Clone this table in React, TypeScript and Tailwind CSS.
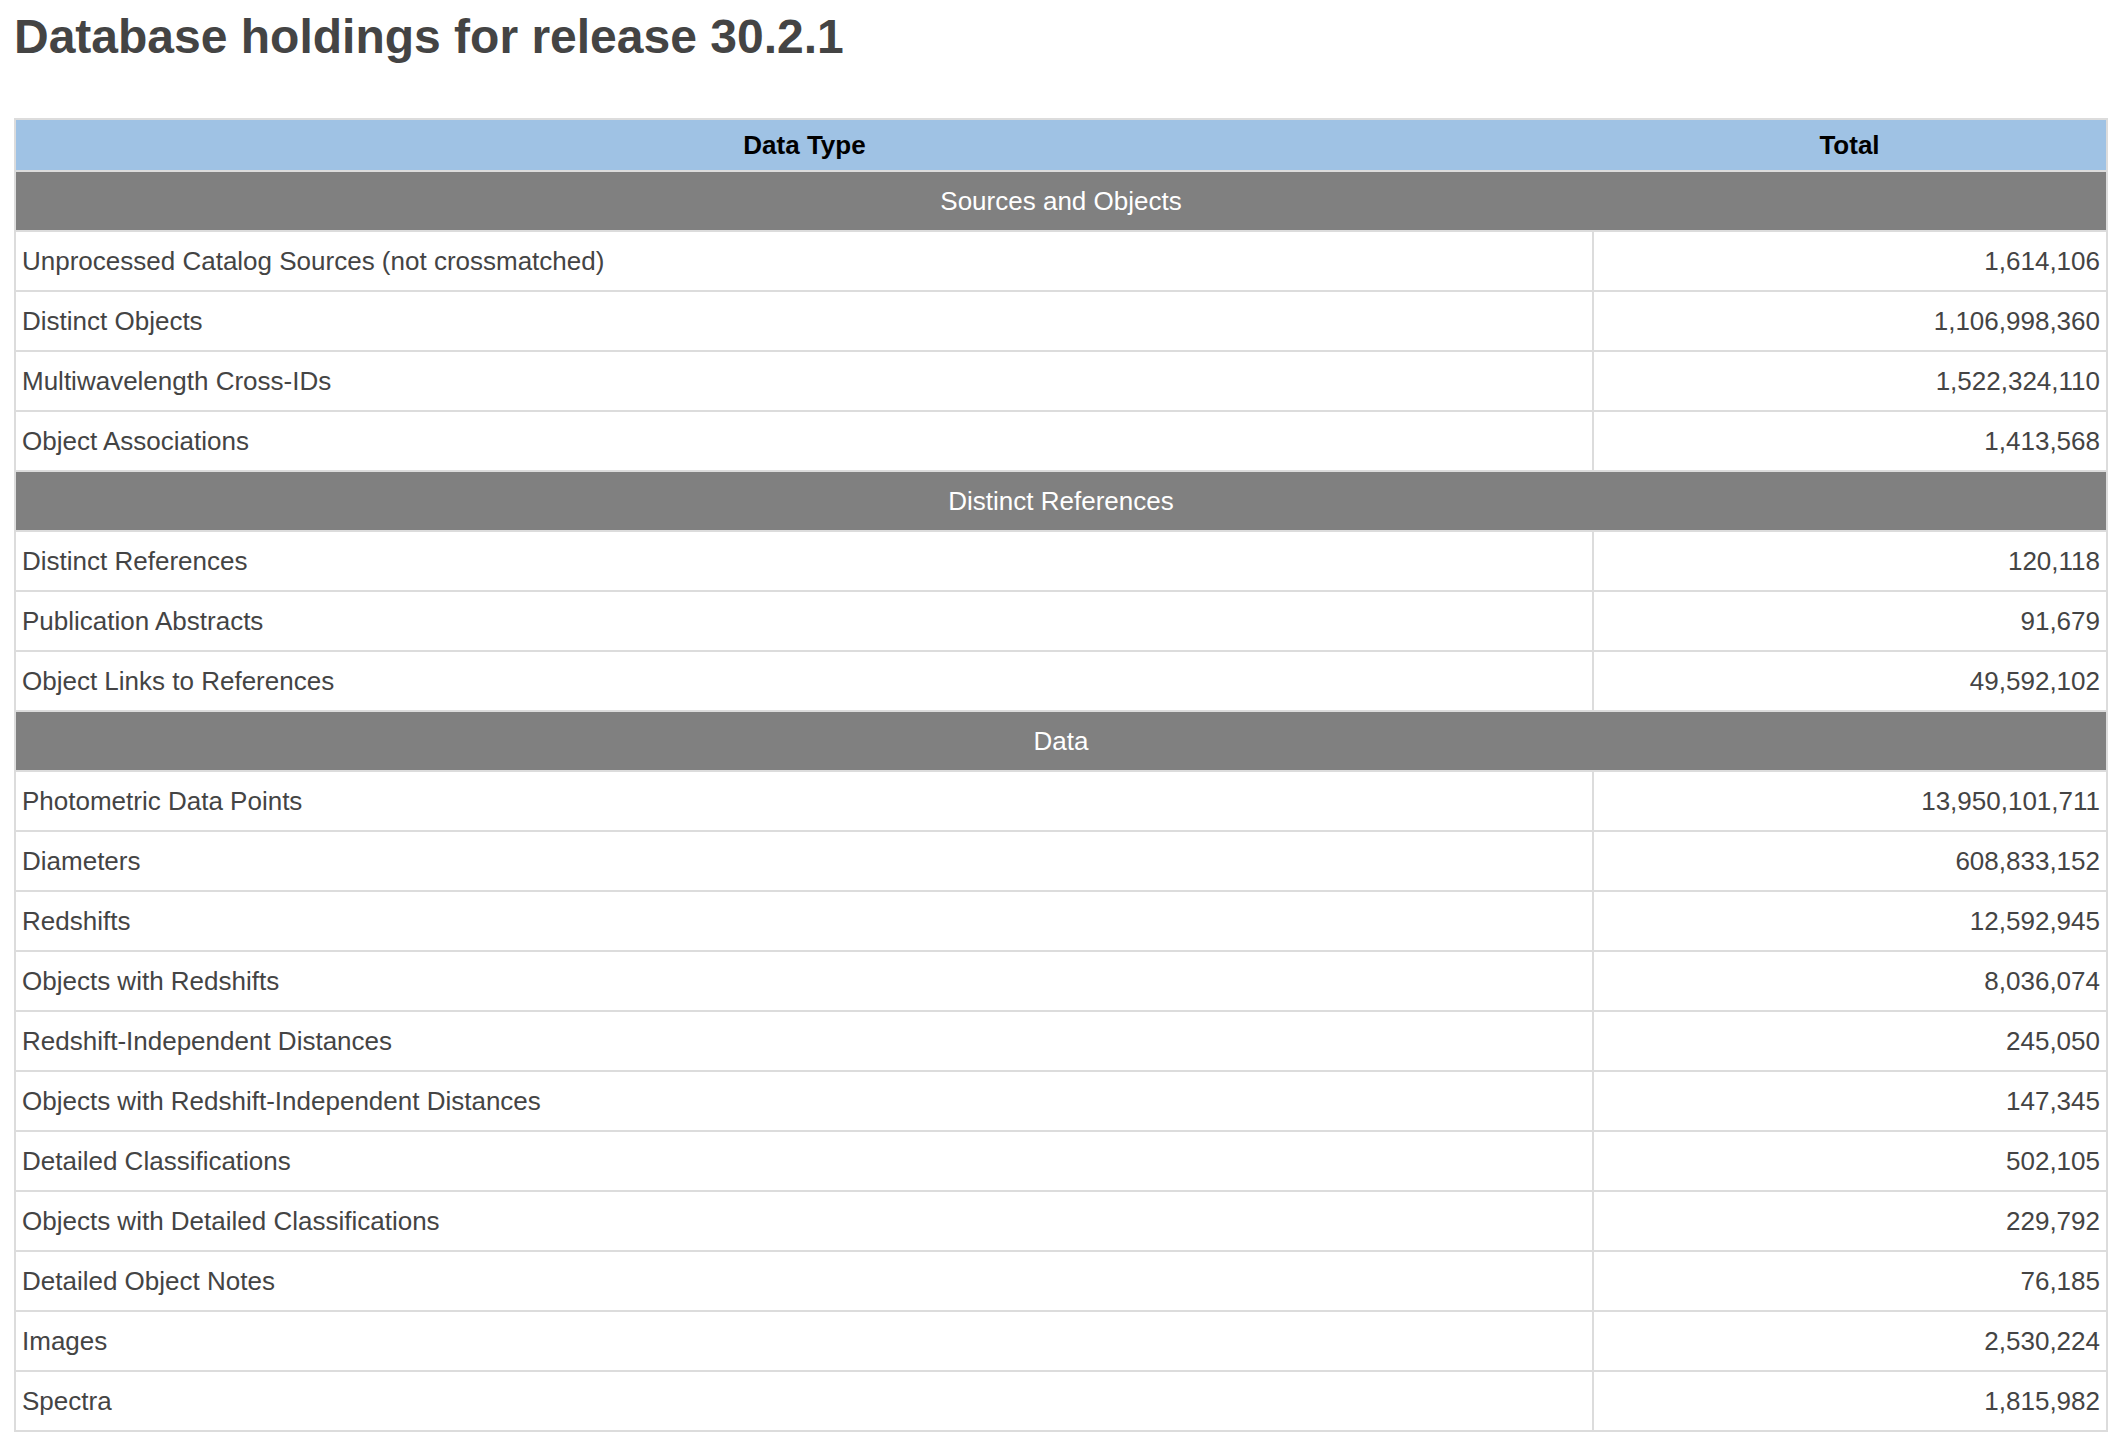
import { Fragment } from 'react';

type Row = { label: string; total: string };
type Section = { title: string; rows: Row[] };

const sections: Section[] = [
  {
    title: 'Sources and Objects',
    rows: [
      { label: 'Unprocessed Catalog Sources (not crossmatched)', total: '1,614,106' },
      { label: 'Distinct Objects', total: '1,106,998,360' },
      { label: 'Multiwavelength Cross-IDs', total: '1,522,324,110' },
      { label: 'Object Associations', total: '1,413,568' },
    ],
  },
  {
    title: 'Distinct References',
    rows: [
      { label: 'Distinct References', total: '120,118' },
      { label: 'Publication Abstracts', total: '91,679' },
      { label: 'Object Links to References', total: '49,592,102' },
    ],
  },
  {
    title: 'Data',
    rows: [
      { label: 'Photometric Data Points', total: '13,950,101,711' },
      { label: 'Diameters', total: '608,833,152' },
      { label: 'Redshifts', total: '12,592,945' },
      { label: 'Objects with Redshifts', total: '8,036,074' },
      { label: 'Redshift-Independent Distances', total: '245,050' },
      { label: 'Objects with Redshift-Independent Distances', total: '147,345' },
      { label: 'Detailed Classifications', total: '502,105' },
      { label: 'Objects with Detailed Classifications', total: '229,792' },
      { label: 'Detailed Object Notes', total: '76,185' },
      { label: 'Images', total: '2,530,224' },
      { label: 'Spectra', total: '1,815,982' },
    ],
  },
];

export default function App() {
  return (
    <div
      className="min-h-screen bg-white px-[14px] pt-[9px] pb-4 text-[#444]"
      style={{ fontFamily: '"Liberation Sans", Arial, Helvetica, sans-serif' }}
    >
      <h1 className="text-[48px] leading-[56px] font-bold text-[#444]">Database holdings for release 30.2.1</h1>

      {/* holdings table */}
      <table className="mt-[53px] w-full border-collapse text-[26px]">
        <thead>
          <tr className="bg-[#9fc2e4]">
            <th className="w-[1578px] border-y-2 border-l-2 border-[#dcdcdc] p-0 text-center leading-[50px] font-bold text-black">
              Data Type
            </th>
            <th className="border-y-2 border-r-2 border-[#dcdcdc] p-0 text-center leading-[50px] font-bold text-black">
              Total
            </th>
          </tr>
        </thead>
        <tbody>
          {sections.map((s) => (
            <Fragment key={s.title}>
              <tr className="bg-[#808080]">
                <td colSpan={2} className="border-2 border-[#dcdcdc] p-0 text-center leading-[58px] text-white">
                  {s.title}
                </td>
              </tr>
              {s.rows.map((r) => (
                <tr key={r.label}>
                  <td className="border-2 border-[#dcdcdc] py-0 pr-[6px] pl-[6px] text-left leading-[58px]">
                    {r.label}
                  </td>
                  <td className="border-2 border-[#dcdcdc] py-0 pr-[6px] pl-[6px] text-right leading-[58px]">
                    {r.total}
                  </td>
                </tr>
              ))}
            </Fragment>
          ))}
        </tbody>
      </table>
    </div>
  );
}
